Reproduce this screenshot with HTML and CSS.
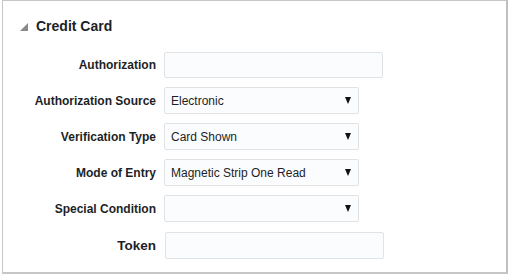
FILE: index.html
```html
<!DOCTYPE html>
<html>
<head>
<meta charset="utf-8">
<link rel="stylesheet" href="styles.css">
</head>
<body>
<div class="panel">
  <div class="header">
    <svg class="disclosure" width="8" height="8" viewBox="0 0 8 8"><polygon points="8,0 8,8 0,8" fill="#8a8a8a"/></svg>
    <span class="title">Credit Card</span>
  </div>
  <div class="form">
    <div class="row">
      <label class="label">Authorization</label>
      <div class="field input"></div>
    </div>
    <div class="row">
      <label class="label">Authorization Source</label>
      <div class="field select"><span>Electronic</span><span class="arrow"></span></div>
    </div>
    <div class="row">
      <label class="label">Verification Type</label>
      <div class="field select"><span>Card Shown</span><span class="arrow"></span></div>
    </div>
    <div class="row">
      <label class="label">Mode of Entry</label>
      <div class="field select"><span>Magnetic Strip One Read</span><span class="arrow"></span></div>
    </div>
    <div class="row">
      <label class="label">Special Condition</label>
      <div class="field select"><span></span><span class="arrow"></span></div>
    </div>
    <div class="row token">
      <label class="label big">Token</label>
      <div class="field input tall"></div>
    </div>
  </div>
</div>
</body>
</html>
```
FILE: styles.css
```css
html, body {
  margin: 0;
  padding: 0;
  background: #ffffff;
}
body {
  font-family: "Liberation Sans", Arial, sans-serif;
  color: #252525;
}
.panel {
  box-sizing: border-box;
  width: 506px;
  height: 274px;
  margin-left: 2px;
  border: 1px solid #c6c6c6;
  border-right: 2px solid #c0c0c0;
  border-bottom: 2px solid #c6c6c6;
  background: #fff;
}
.header {
  display: flex;
  align-items: center;
  gap: 8px;
  padding: 16px 0 0 17px;
  height: 18px;
}
.disclosure {
  display: block;
  margin-top: 2px;
}
.title {
  font-size: 14px;
  font-weight: bold;
  color: #1c1f26;
}
.form {
  display: flex;
  flex-direction: column;
  gap: 9px;
  padding-top: 17px;
}
.row {
  display: grid;
  grid-template-columns: 153px auto;
  column-gap: 8px;
  align-items: center;
}
.row.token {
  margin-top: 1px;
  column-gap: 9px;
}
.label {
  text-align: right;
  font-size: 12px;
  font-weight: bold;
  color: #1c1f26;
}
.label.big {
  font-size: 13.5px;
}
.field {
  box-sizing: border-box;
  height: 26px;
  border: 1px solid #dfe3e6;
  border-radius: 2px;
  background: #fbfcfd;
  font-size: 12px;
  color: #1c1f26;
}
.input {
  width: 219px;
}
.input.tall {
  height: 27px;
}
.select {
  width: 195px;
  display: flex;
  align-items: center;
  justify-content: space-between;
  padding: 0 7px 0 6px;
  height: 27px;
}
.arrow {
  width: 0;
  height: 0;
  border-left: 3.5px solid transparent;
  border-right: 3.5px solid transparent;
  border-top: 7px solid #111;
}
```
